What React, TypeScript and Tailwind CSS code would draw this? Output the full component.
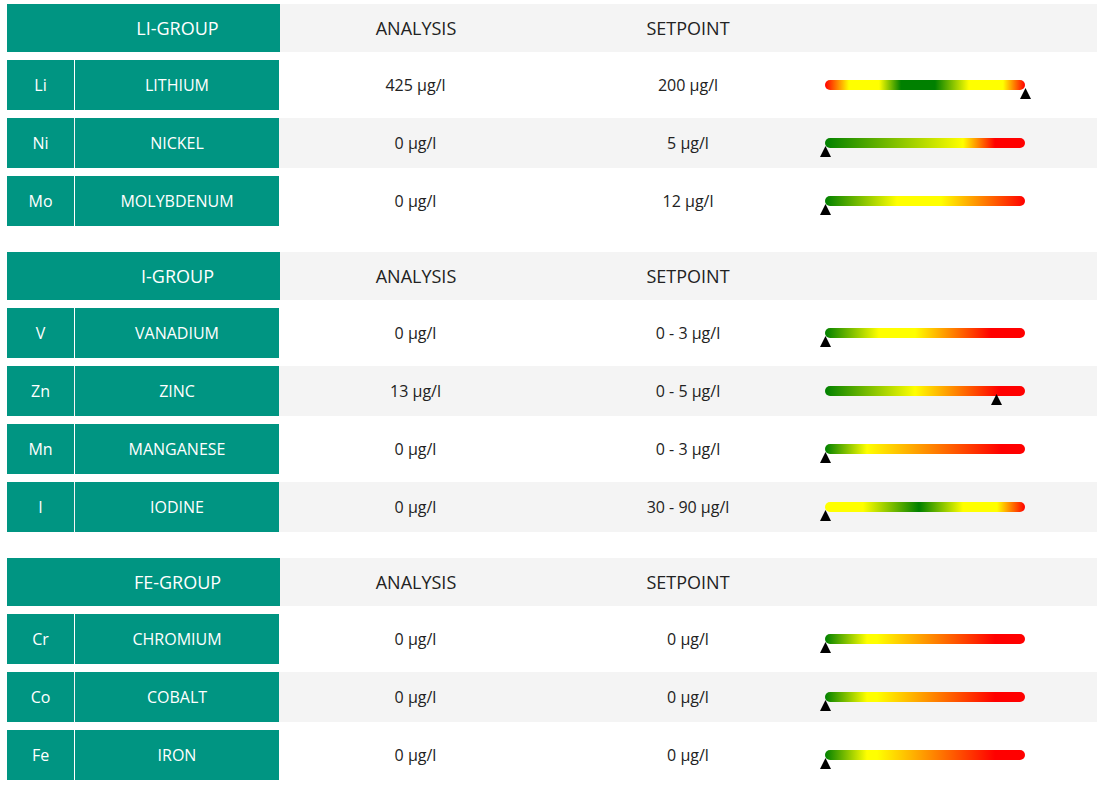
import React from "react";

type Row = { sym: string; name: string; analysis: string; setpoint: string; grad: string; pos: number };
type Group = { title: string; rows: Row[] };

const G1 = "bg-[linear-gradient(to_right,#ff0000_0%,#ffff00_12%,#ffff00_27%,#008000_38%,#008000_55%,#ffff00_72%,#ffff00_89%,#ff0000_100%)]";
const G_NI = "bg-[linear-gradient(to_right,#008000_0%,#ffff00_69%,#ff0000_85%,#ff0000_100%)]";
const G_MO = "bg-[linear-gradient(to_right,#008000_0%,#ffff00_36%,#ffff00_58%,#ff0000_100%)]";
const G_V = "bg-[linear-gradient(to_right,#008000_0%,#ffff00_27%,#ffff00_45%,#ff0000_83%,#ff0000_100%)]";
const G_ZN = "bg-[linear-gradient(to_right,#008000_0%,#ffff00_45%,#ff0000_87%,#ff0000_100%)]";
const G_MN = "bg-[linear-gradient(to_right,#008000_0%,#ffff00_21%,#ff0000_88%,#ff0000_100%)]";
const G_I = "bg-[linear-gradient(to_right,#ffff00_0%,#ffff00_19%,#008000_47%,#ffff00_69%,#ffff00_86%,#ff0000_100%)]";
const G_FE = "bg-[linear-gradient(to_right,#008000_0%,#ffff00_21%,#ffff00_26%,#ff0000_85%,#ff0000_100%)]";

const groups: Group[] = [
  {
    title: "LI-GROUP",
    rows: [
      { sym: "Li", name: "LITHIUM", analysis: "425 µg/l", setpoint: "200 µg/l", grad: G1, pos: 1 },
      { sym: "Ni", name: "NICKEL", analysis: "0 µg/l", setpoint: "5 µg/l", grad: G_NI, pos: 0 },
      { sym: "Mo", name: "MOLYBDENUM", analysis: "0 µg/l", setpoint: "12 µg/l", grad: G_MO, pos: 0 },
    ],
  },
  {
    title: "I-GROUP",
    rows: [
      { sym: "V", name: "VANADIUM", analysis: "0 µg/l", setpoint: "0 - 3 µg/l", grad: G_V, pos: 0 },
      { sym: "Zn", name: "ZINC", analysis: "13 µg/l", setpoint: "0 - 5 µg/l", grad: G_ZN, pos: 0.858 },
      { sym: "Mn", name: "MANGANESE", analysis: "0 µg/l", setpoint: "0 - 3 µg/l", grad: G_MN, pos: 0 },
      { sym: "I", name: "IODINE", analysis: "0 µg/l", setpoint: "30 - 90 µg/l", grad: G_I, pos: 0 },
    ],
  },
  {
    title: "FE-GROUP",
    rows: [
      { sym: "Cr", name: "CHROMIUM", analysis: "0 µg/l", setpoint: "0 µg/l", grad: G_FE, pos: 0 },
      { sym: "Co", name: "COBALT", analysis: "0 µg/l", setpoint: "0 µg/l", grad: G_FE, pos: 0 },
      { sym: "Fe", name: "IRON", analysis: "0 µg/l", setpoint: "0 µg/l", grad: G_FE, pos: 0 },
    ],
  },
];

function Marker({ pos }: { pos: number }) {
  return (
    <svg
      className="absolute top-[8px]"
      style={{ left: `${pos * 200 - 5.5}px` }}
      width="11"
      height="11"
      viewBox="0 0 11 11"
    >
      <polygon points="5.5,0 11,11 0,11" fill="#000" />
    </svg>
  );
}

function DataRow({ row, gray }: { row: Row; gray: boolean }) {
  return (
    <div className={`flex h-[50px] items-stretch ${gray ? "bg-[#f4f4f4]" : "bg-white"}`}>
      <div className="flex w-[67px] items-center justify-center bg-[#009582] text-white">{row.sym}</div>
      <div className="ml-px flex w-[204px] items-center justify-center bg-[#009582] text-white">{row.name}</div>
      <div className="flex w-[273px] items-center justify-center">{row.analysis}</div>
      <div className="flex w-[272px] items-center justify-center">{row.setpoint}</div>
      <div className="flex flex-1 items-center pl-px">
        <div className="relative h-[10px] w-[200px]">
          <div className={`h-[10px] w-[200px] rounded-full ${row.grad}`} />
          <Marker pos={row.pos} />
        </div>
      </div>
    </div>
  );
}

function GroupBlock({ g }: { g: Group }) {
  return (
    <div className="flex flex-col gap-2">
      <div className="flex h-[48px] items-stretch bg-[#f4f4f4] text-[18px]">
        <div className="flex w-[273px] items-center bg-[#009582] pl-[68px] text-white">
          <div className="flex-1 text-center">{g.title}</div>
        </div>
        <div className="flex w-[272px] items-center justify-center">ANALYSIS</div>
        <div className="flex w-[272px] items-center justify-center">SETPOINT</div>
        <div className="flex-1" />
      </div>
      {g.rows.map((r, i) => (
        <DataRow key={r.sym} row={r} gray={i % 2 === 1} />
      ))}
    </div>
  );
}

export default function App() {
  return (
    <div
      className="flex min-h-[799px] w-[1105px] flex-col gap-[26px] bg-white pl-[7px] pr-[8px] pt-[4px] text-[16px] text-[#222]"
      style={{ fontFamily: '"Open Sans", "Noto Sans", sans-serif' }}
    >
      {groups.map((g) => (
        <GroupBlock key={g.title} g={g} />
      ))}
    </div>
  );
}
